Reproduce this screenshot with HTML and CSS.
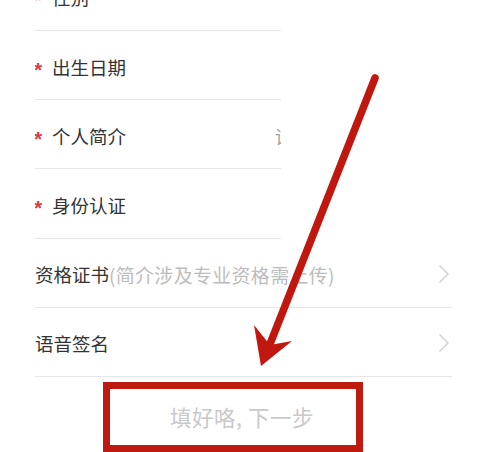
FILE: index.html
```html
<!DOCTYPE html>
<html lang="zh">
<head>
<meta charset="utf-8">
<link rel="stylesheet" href="styles.css">
</head>
<body>
<div class="page">
  <div class="form">
    <div class="group group-top">
      <div class="row"><span class="req">*</span><span class="label">性别</span></div>
      <div class="row"><span class="req">*</span><span class="label">出生日期</span></div>
      <div class="row"><span class="req">*</span><span class="label">个人简介</span><span class="value">请填写个人简介</span></div>
      <div class="row"><span class="req">*</span><span class="label">身份认证</span></div>
    </div>
    <div class="group group-bottom">
      <div class="row"><span class="label">资格证书</span><span class="hint">(简介涉及专业资格需上传)</span><span class="chev"><svg width="12" height="20" viewBox="0 0 12 20"><path d="M1.5 1.5 L10 10 L1.5 18.5" fill="none" stroke="#cfcfcf" stroke-width="1.4"/></svg></span></div>
      <div class="row"><span class="label">语音签名</span><span class="chev"><svg width="12" height="20" viewBox="0 0 12 20"><path d="M1.5 1.5 L10 10 L1.5 18.5" fill="none" stroke="#cfcfcf" stroke-width="1.4"/></svg></span></div>
    </div>
  </div>
  <div class="btn-wrap">
    <div class="btn">填好咯, 下一步</div>
  </div>
  <svg class="arrow" width="492" height="452" viewBox="0 0 492 452">
    <line x1="375" y1="78" x2="270" y2="344" stroke="#c0170f" stroke-width="7.5" stroke-linecap="round"/>
    <polygon points="261,366 254,325 270,345 292,341" fill="#c0170f"/>
  </svg>
</div>
</body>
</html>
```
FILE: styles.css
```css
html, body {
  margin: 0;
  padding: 0;
  background: #ffffff;
}
body {
  font-family: "Noto Sans CJK SC", "Noto Sans", sans-serif;
  color: #333333;
  overflow: hidden;
  width: 492px;
  height: 452px;
}
.page {
  position: relative;
  width: 492px;
  height: 452px;
  overflow: hidden;
}
.form {
  padding-left: 35px;
  margin-top: -38.2px;
}
.group-top {
  width: 246px;
}
.group-bottom {
  width: 417px;
}
.row {
  box-sizing: border-box;
  height: 69.2px;
  border-bottom: 1px solid #e6e6e6;
  display: flex;
  align-items: center;
  padding-top: 3px;
  font-size: 18.5px;
  white-space: nowrap;
  overflow: hidden;
}
.req {
  color: #e0393e;
  font-family: "Liberation Sans", sans-serif;
  font-weight: bold;
  font-size: 21px;
  width: 17px;
  flex: none;
  position: relative;
  top: 3px;
  left: -1px;
}
.label {
  color: #333333;
  flex: none;
}
.value {
  color: #a0a0a0;
  margin-left: 149px;
  font-size: 18px;
  flex: none;
}
.hint {
  color: #bcbcbc;
  font-size: 19px;
  letter-spacing: 0.3px;
  flex: none;
}
.chev {
  margin-left: auto;
  display: flex;
  align-items: center;
  margin-right: 2px;
}
.btn-wrap {
  padding-top: 5px;
  padding-left: 103px;
}
.btn {
  box-sizing: border-box;
  width: 260px;
  height: 70px;
  border: 7px solid #bf1a10;
  padding-left: 18px;
  display: flex;
  align-items: center;
  justify-content: center;
  color: #c9c9c9;
  font-size: 21.5px;
  letter-spacing: 0.5px;
}
.arrow {
  position: absolute;
  left: 0;
  top: 0;
  pointer-events: none;
}
```
